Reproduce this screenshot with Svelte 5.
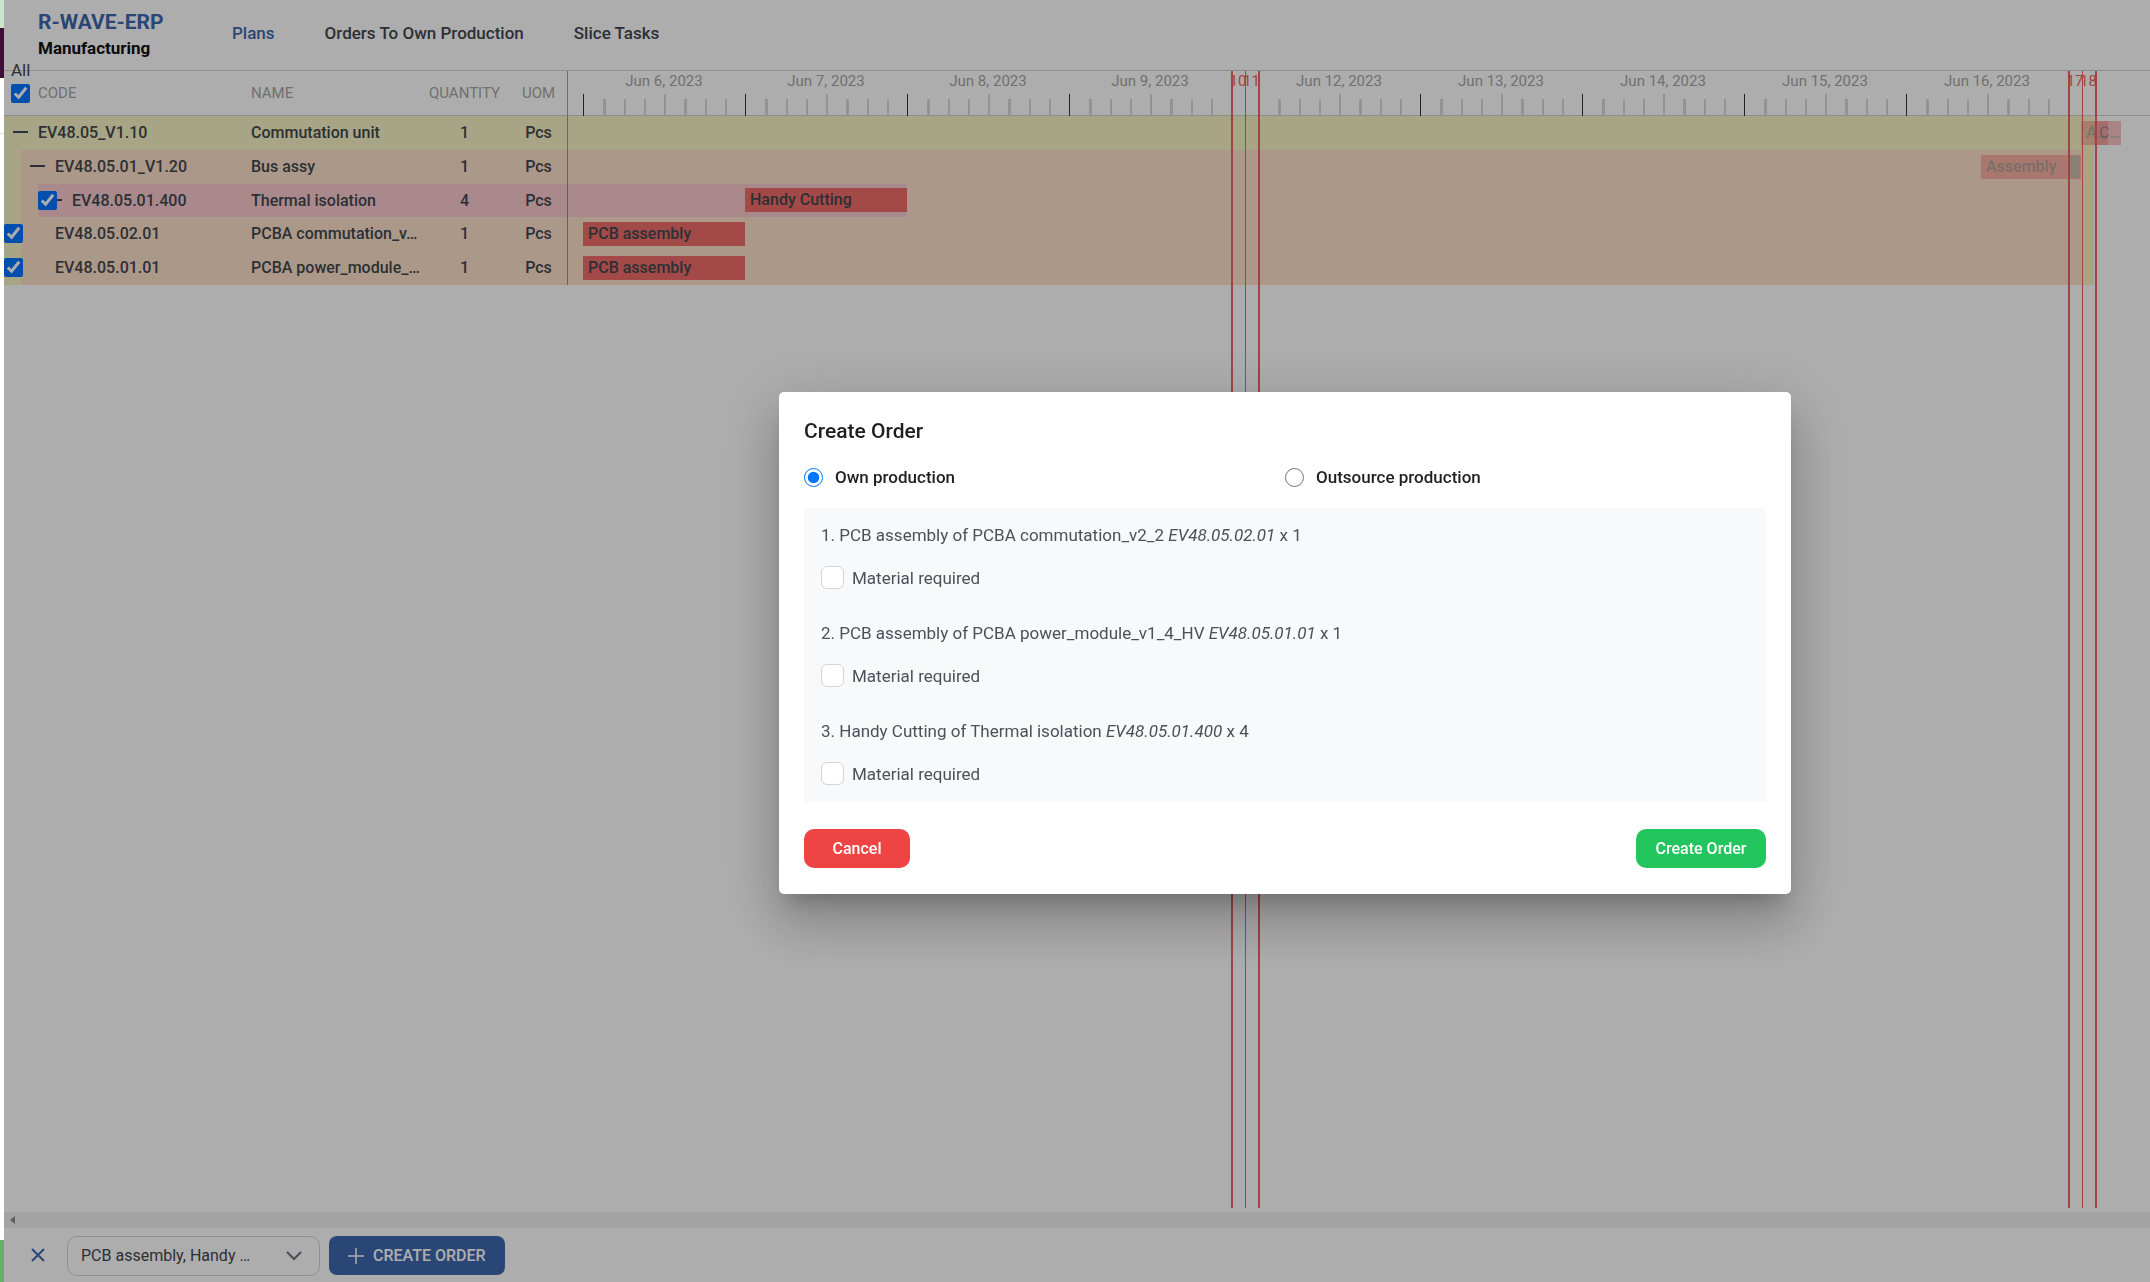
<script>
  const rows = [
    { id: 'unit', level: 0, tone: 'yellow', code: 'EV48.05_V1.10', name: 'Commutation unit', qty: 1, dash: true },
    { id: 'bus', level: 1, tone: 'peach', code: 'EV48.05.01_V1.20', name: 'Bus assy', qty: 1, dash: true },
    { id: 'iso', level: 2, tone: 'pink', code: 'EV48.05.01.400', name: 'Thermal isolation', qty: 4, dash: true, check: true },
    { id: 'comm', level: 1, tone: 'peach', code: 'EV48.05.02.01', name: 'PCBA commutation_v…', qty: 1, check: true, leaf: true },
    { id: 'power', level: 1, tone: 'peach', code: 'EV48.05.01.01', name: 'PCBA power_module_…', qty: 1, check: true, leaf: true }
  ];

  const DAY = 162;
  const days = [
    { label: 'Jun 6, 2023', width: DAY },
    { label: 'Jun 7, 2023', width: DAY },
    { label: 'Jun 8, 2023', width: DAY },
    { label: 'Jun 9, 2023', width: DAY },
    { label: '10', width: 14, off: true },
    { label: '11', width: 13, off: true },
    { label: 'Jun 12, 2023', width: DAY },
    { label: 'Jun 13, 2023', width: DAY },
    { label: 'Jun 14, 2023', width: DAY },
    { label: 'Jun 15, 2023', width: DAY },
    { label: 'Jun 16, 2023', width: DAY },
    { label: '17', width: 14, off: true },
    { label: '18', width: 13, off: true }
  ];
  const hours = [20, 41, 61, 81, 101, 122, 142];

  const lanes = [
    { id: 'unit', spans: [['yellow', 1526]], bars: [
      { text: 'A…', left: 1513, width: 27, faded: true },
      { text: 'C…', left: 1526, width: 27, faded: true }
    ] },
    { id: 'bus', spans: [['yellow', 1526], ['peach', 1513]], bars: [
      { text: 'Assembly', left: 1413, width: 100, faded: true, pause: true }
    ] },
    { id: 'iso', spans: [['yellow', 1526], ['peach', 1513], ['pink', 339]], bars: [{ text: 'Handy Cutting', left: 177, width: DAY }] },
    { id: 'comm', spans: [['yellow', 1526], ['peach', 1513]], bars: [{ text: 'PCB assembly', left: 15, width: DAY }] },
    { id: 'power', spans: [['yellow', 1526], ['peach', 1513]], bars: [{ text: 'PCB assembly', left: 15, width: DAY }] }
  ];
  const offLines = [
    { left: 663, wide: true }, { left: 677 }, { left: 690, wide: true },
    { left: 1500, wide: true }, { left: 1514 }, { left: 1527, wide: true }
  ];

  const items = [
    { text: '1. PCB assembly of PCBA commutation_v2_2', code: 'EV48.05.02.01', qty: 1 },
    { text: '2. PCB assembly of PCBA power_module_v1_4_HV', code: 'EV48.05.01.01', qty: 1 },
    { text: '3. Handy Cutting of Thermal isolation', code: 'EV48.05.01.400', qty: 4 }
  ];
</script>

<div class="page">
  <div class="edge"><span class="mint"></span><span class="plum"></span><span class="blank"></span><span class="rest"></span><span class="leafy"></span></div>
  <div class="app">
    <header>
      <div class="brand"><strong>R-WAVE-ERP</strong><span>Manufacturing</span></div>
      <nav>
        <a class="active" href="#plans">Plans</a>
        <a href="#orders">Orders To Own Production</a>
        <a href="#tasks">Slice Tasks</a>
      </nav>
    </header>

    <main>
      <div class="tree">
        <table>
          <thead>
            <tr>
              <th class="code">
                <label class="all" for="all">All</label>
                <input id="all" class="tick head" type="checkbox" checked />CODE
              </th>
              <th class="name">NAME</th>
              <th class="qty">QUANTITY</th>
              <th class="uom">UOM</th>
            </tr>
          </thead>
          <tbody>
            {#each rows as row (row.id)}
              <tr class="{row.tone} {row.id}">
                <td class="code level{row.level}">
                  {#if row.dash}<span class="dash"></span>{/if}
                  {#if row.check}<input class="tick" class:leaf={row.leaf} type="checkbox" aria-label={row.code} checked />{/if}
                  {row.code}
                </td>
                <td class="name">{row.name}</td>
                <td class="qty">{row.qty}</td>
                <td class="uom">Pcs</td>
              </tr>
            {/each}
          </tbody>
        </table>
      </div>

      <div class="chart">
        <div class="scale">
          {#each days as day}
            <div class="day" class:off={day.off} style="width: {day.width}px">
              <span>{day.label}</span>
              {#if !day.off}
                <i class="midnight"></i>
                {#each hours as x, n}
                  <i class="hour" class:noon={n === 3} class:thick={n === 0 || n === 4} style="left: {x}px"></i>
                {/each}
              {/if}
            </div>
          {/each}
        </div>
        {#each lanes as lane (lane.id)}
          <div class="lane {lane.id}">
            {#each lane.spans as [tone, width]}
              <div class="span {tone}" style="width: {width}px"></div>
            {/each}
            {#each lane.bars as bar}
              <div class="bar" class:faded={bar.faded} style="left: {bar.left}px; width: {bar.width}px">
                {bar.text}{#if bar.pause}<i class="pause"></i>{/if}
              </div>
            {/each}
          </div>
        {/each}
        {#each offLines as line}
          <div class="offline" class:wide={line.wide} style="left: {line.left}px"></div>
        {/each}
      </div>
    </main>

    <div class="scrollbar">
      <svg width="5" height="8" viewBox="0 0 5 8"><path d="M5 0v8L0 4z" fill="#8a8a8a" /></svg>
    </div>

    <footer>
      <button class="close" aria-label="Clear selection">
        <svg width="14" height="14" viewBox="0 0 14 14"><path d="M1 1l12 12M13 1L1 13" fill="none" stroke="#3f68af" stroke-width="2" /></svg>
      </button>
      <div class="picker">
        <select aria-label="Operations"><option>PCB assembly, Handy …</option></select>
        <svg width="16" height="10" viewBox="0 0 16 10"><path d="M1 1l7 7 7-7" fill="none" stroke="#6b7280" stroke-width="2" /></svg>
      </div>
      <button class="order">
        <svg width="16" height="16" viewBox="0 0 16 16"><path d="M8 0v16M0 8h16" stroke="#fff" stroke-width="1.5" /></svg>
        CREATE ORDER
      </button>
    </footer>
  </div>

  <div class="backdrop">
    <div class="dialog" role="dialog" aria-modal="true" aria-labelledby="dialog-title">
      <h2 id="dialog-title">Create Order</h2>
      <div class="kinds">
        <label><input type="radio" name="kind" checked />Own production</label>
        <label><input type="radio" name="kind" />Outsource production</label>
      </div>
      <div class="items">
        {#each items as item}
          <div class="item">
            <p>{item.text} <em>{item.code}</em> x {item.qty}</p>
            <label><input type="checkbox" />Material required</label>
          </div>
        {/each}
      </div>
      <div class="actions">
        <button class="cancel">Cancel</button>
        <button class="create">Create Order</button>
      </div>
    </div>
  </div>
</div>

<style>
  .page, .page * { box-sizing: border-box; }
  .page {
    display: flex;
    height: 100vh;
    overflow: hidden;
    background: #fff;
    color: #42474e;
    font-family: Roboto, "Open Sans", sans-serif;
    font-size: 16px;
    font-weight: 500;
    line-height: 20px;
  }
  button, select { font: inherit; }
  button { display: flex; align-items: center; border: 0; cursor: pointer; white-space: nowrap; }

  .edge { display: flex; flex: 0 0 4px; flex-direction: column; }
  .mint { height: 28px; background: #c8e6c9; }
  .plum { height: 50px; background: #3c0e38; }
  .blank { height: 56px; border-bottom: 1px solid #e0e0e0; }
  .rest { flex: 1; }
  .leafy { height: 42px; background: #66b366; }

  .app { display: flex; flex: 1; flex-direction: column; min-width: 0; background: #fff; }

  header { display: flex; height: 71px; border-bottom: 1px solid #d2d2d2; padding-left: 34px; }
  .brand { display: flex; flex: 0 0 194px; flex-direction: column; padding-top: 8px; color: #111; }
  .brand strong { font-size: 21px; line-height: 28px; font-weight: 700; color: #3f68af; }
  .brand span { font-size: 17px; line-height: 24px; font-weight: 700; }
  nav { display: flex; gap: 50px; padding-top: 23px; font-size: 17px; }
  nav a { color: inherit; text-decoration: none; white-space: nowrap; }
  nav .active { color: #3f68af; }

  main { display: flex; flex: 1; min-height: 0; }
  .tree { flex: 0 0 564px; }
  table { width: 100%; table-layout: fixed; border-collapse: separate; border-spacing: 0; }
  th, td { padding: 0; text-align: center; font-weight: 500; white-space: nowrap; }
  th { height: 45px; border-bottom: 1px solid #d2d2d2; color: #a6a6a6; font-size: 15px; font-weight: 400; }
  tbody tr { height: 34px; }
  tbody tr.iso, .lane.iso { height: 33px; }
  .code { position: relative; width: 247px; padding-left: 34px; text-align: left; }
  .name { width: 168px; text-align: left; }
  .qty { width: 91px; }
  .uom { width: 58px; border-right: 1px solid rgba(0, 0, 0, 0.36); }
  .yellow { background: #f7f4c6; }
  .peach { background: #fee1cb; }
  .pink { background: #fbcbce; }
  .level1 { padding-left: 51px; background: linear-gradient(to right, #f7f4c6 17px, transparent 17px); }
  .level2 { padding-left: 68px; background: linear-gradient(to right, #f7f4c6 17px, #fee1cb 17px 34px, transparent 34px); }
  .dash { display: inline-block; width: 15px; height: 2px; margin: 0 6px 0 -25px; background: #42474e; vertical-align: 5px; }
  .tick { position: absolute; top: 7px; left: 34px; width: 19px; height: 19px; margin: 0; accent-color: #0075ff; }
  .tick.leaf { left: 0; }
  .tick.head { top: 13px; left: 7px; }
  .all { position: absolute; top: -11px; left: 7px; color: #42474e; font-size: 17px; font-weight: 400; }

  .chart { position: relative; flex: 1; min-width: 0; }
  .scale { display: flex; height: 45px; border-bottom: 1px solid #d2d2d2; padding-left: 15px; color: #a6a6a6; font-size: 15px; font-weight: 400; }
  .day { position: relative; flex: none; text-align: center; white-space: nowrap; }
  .day.off { color: #ef6461; }
  .off span { display: block; margin: 0 -4px; }
  .midnight, .hour { position: absolute; bottom: -1px; width: 1px; height: 22px; background: #333; }
  .midnight { left: 0; }
  .hour { bottom: 0; width: 2px; height: 16px; background: #d9d9d9; }
  .hour.noon { height: 21px; }
  .hour.thick { width: 3px; }
  .lane { position: relative; height: 34px; }
  .span { position: absolute; top: 0; left: 0; height: 100%; }
  .bar { position: absolute; top: 5px; height: 24px; padding-left: 5px; overflow: hidden; background: #f06e6b; line-height: 24px; white-space: nowrap; }
  .iso .bar { top: 4px; }
  .bar.faded { opacity: 0.4; }
  .pause { position: absolute; top: 1px; right: 1px; width: 11px; height: 22px; background: #80857e; }
  .offline { position: absolute; top: 0; bottom: 4px; width: 1px; background: #ef6461; }
  .offline.wide { width: 2px; }

  .scrollbar { display: flex; flex: none; align-items: center; height: 16px; padding-left: 6px; background: #f0f0f0; }
  footer { display: flex; align-items: flex-start; height: 54px; padding: 8px 0 0 17px; }
  .close { width: 34px; height: 38px; justify-content: center; padding: 0; background: none; margin-right: 12px; }
  .picker { display: flex; position: relative; align-items: center; width: 253px; margin-right: 9px; }
  .picker select { width: 100%; height: 40px; border: 1px solid #d1d5db; border-radius: 10px; padding: 0 48px 0 13px; appearance: none; background: #fff; color: #42474e; font-weight: 400; }
  .picker svg { position: absolute; right: 18px; pointer-events: none; }
  .order { gap: 9px; height: 39px; border-radius: 8px; padding: 0 19px; background: #3f68af; color: #fff; }

  .backdrop { display: flex; position: fixed; inset: 0 0 0 4px; align-items: center; justify-content: center; padding: 4px 0 0 416px; background: rgba(0, 0, 0, 0.32); }
  .dialog {
    width: 1012px;
    border-radius: 5px;
    padding: 25px 25px 26px;
    background: #fff;
    box-shadow: 0 15px 20px -9px rgba(0, 0, 0, 0.2), 0 32px 50px 4px rgba(0, 0, 0, 0.14), 0 12px 60px 10px rgba(0, 0, 0, 0.12);
    color: #1f1f1f;
  }
  h2 { margin: 0; font-size: 21px; font-weight: 500; line-height: 28px; }
  .kinds { display: grid; grid-template-columns: 1fr 1fr; margin: 22px 0 21px; font-size: 17px; }
  .kinds label, .item label { display: flex; align-items: center; }
  .kinds input { width: 19px; height: 19px; margin: 0 12px 0 0; accent-color: #0075ff; }
  .items { display: grid; gap: 34px; padding: 17px; background: #f8f9fb; color: #4b5159; font-size: 17px; font-weight: 400; }
  .item { display: grid; gap: 21px; }
  .item p { margin: 0; }
  .item input { width: 23px; height: 23px; margin: 0 8px 0 0; border: 1px solid #d1d5db; border-radius: 6px; appearance: none; background: #fff; }
  .actions { display: flex; justify-content: space-between; margin-top: 27px; }
  .actions button { justify-content: center; height: 39px; border-radius: 10px; padding: 0 16px; background: #22c55e; color: #fff; }
  .actions .create { width: 130px; }
  .actions .cancel { width: 106px; background: #ef4444; }
</style>
